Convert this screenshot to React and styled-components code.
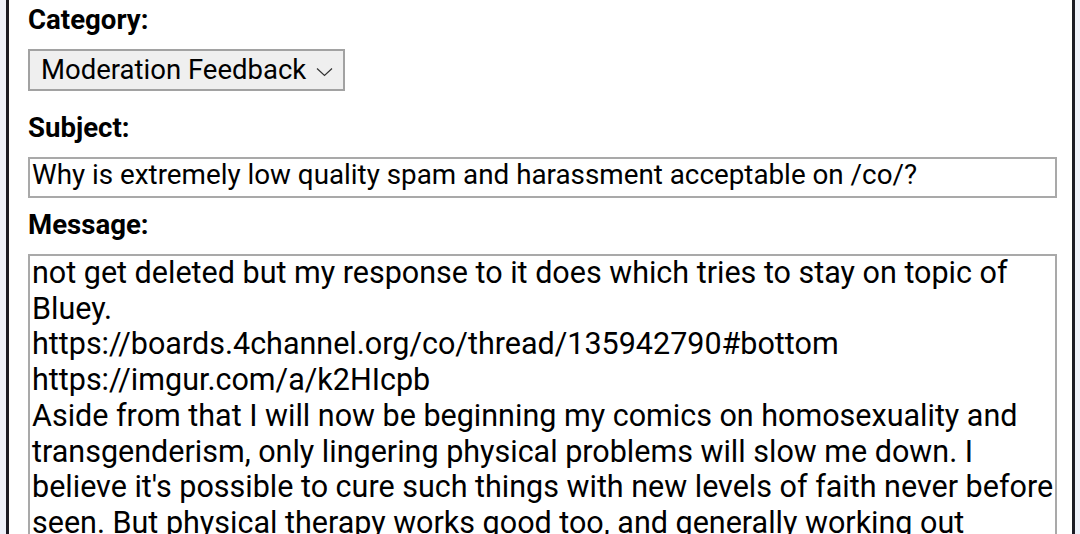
import React from 'react'
import styled, { createGlobalStyle } from 'styled-components'

const Global = createGlobalStyle`
  html, body {
    margin: 0;
    padding: 0;
    background: #eef1fa;
    overflow: hidden;
  }
  body {
    font-family: Roboto, "Liberation Sans", sans-serif;
    color: #000;
  }
`

const Page = styled.div`
  padding: 0 5px 0 6px;
`

const Panel = styled.form`
  margin-top: -20px;
  background: #fff;
  border: 3px solid #1b1b24;
  padding: 21px 15px 40px 19px;
  display: flex;
  flex-direction: column;
  min-height: 700px;
`

const Label = styled.label`
  display: block;
  font-size: 27.6px;
  font-weight: 700;
  line-height: 32px;
  margin: ${p => p.$first ? '0' : '11px'} 0 13px 0;
`

const Select = styled.div`
  display: inline-flex;
  align-items: center;
  align-self: flex-start;
  gap: 10px;
  height: 42px;
  box-sizing: border-box;
  padding: 0 10px 0 11px;
  margin-bottom: 10px;
  background: #efefef;
  border: 2px solid #a2a2a2;
  font-size: 27.5px;
  line-height: 38px;
`

const Chevron = styled.svg`
  width: 17px;
  height: 10px;
  margin-top: 3px;
`

const Input = styled.div`
  height: 41px;
  box-sizing: border-box;
  border: 2px solid #a9a9a9;
  padding: 1px 2px 0;
  font-size: 27.8px;
  line-height: 30px;
  white-space: nowrap;
  overflow: hidden;
`

const TextArea = styled.div`
  border: 2px solid #a9a9a9;
  border-bottom: none;
  padding: 0 2px;
  font-size: 30.5px;
  line-height: 35.7px;
  height: 400px;
  overflow: hidden;
`

const Line = styled.div`
  white-space: nowrap;
  margin-top: ${p => p.$first ? '-1px' : '0'};
`

const lines = [
  'not get deleted but my response to it does which tries to stay on topic of',
  'Bluey.',
  'https://boards.4channel.org/co/thread/135942790#bottom',
  'https://imgur.com/a/k2HIcpb',
  'Aside from that I will now be beginning my comics on homosexuality and',
  'transgenderism, only lingering physical problems will slow me down. I',
  "believe it's possible to cure such things with new levels of faith never before",
  'seen. But physical therapy works good too, and generally working out',
]

export default function App() {
  return (
    <>
      <Global />
      <Page>
        <Panel>
          <Label $first>Category:</Label>
          <Select>
            Moderation Feedback
            <Chevron viewBox="0 0 17 10">
              <path d="M1 1.5 L8.5 8.5 L16 1.5" fill="none" stroke="#333" strokeWidth="1.2" />
            </Chevron>
          </Select>
          <Label>Subject:</Label>
          <Input>Why is extremely low quality spam and harassment acceptable on /co/?</Input>
          <Label>Message:</Label>
          <TextArea>
            {lines.map((l, i) => <Line key={l} $first={i === 0}>{l}</Line>)}
          </TextArea>
        </Panel>
      </Page>
    </>
  )
}
